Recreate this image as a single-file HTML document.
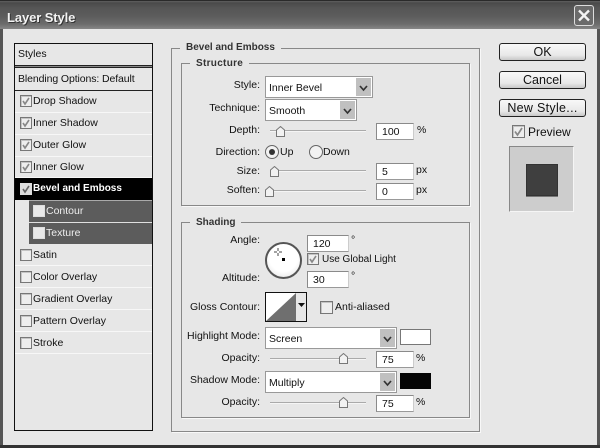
<!DOCTYPE html>
<html><head><meta charset="utf-8"><style>
html,body{margin:0;padding:0;background:#e7e7e7}
#p{position:relative;width:600px;height:448px;overflow:hidden;background:#e7e7e7;font-family:"Liberation Sans",sans-serif;font-size:10.5px;color:#111;filter:blur(.35px)}
#p div,#p span.t{position:absolute;box-sizing:border-box;white-space:nowrap}
.t{line-height:14px}
.r{text-align:right;width:90px}
.row{left:15px;width:137px;height:22px;border-bottom:1px solid #f7f7f7}
.cb{width:12px;height:12px;border:1px solid #777;background:#eee;box-shadow:inset 1px 1px 0 #c4c4c4}
.in{background:#fff;border:1px solid #8a8a8a;border-right-color:#ccc;border-bottom-color:#999;height:17px;font-size:10.5px;line-height:16px;padding-left:5px}
.sel{background:#fff;border:1px solid #999;height:22px;line-height:22px;padding-left:3px;font-size:10.5px}
.ar{top:1px;right:1px;bottom:1px;width:15px;background:#c0c0c0}
.ar svg{position:absolute;left:3px;top:7px}
.tr{height:2px;background:#aaa;border-bottom:1px solid #f5f5f5;box-sizing:content-box}
.th{position:absolute}
.g{border:1px solid #888;box-shadow:1px 1px 0 #f8f8f8}
.lb{background:#e7e7e7;font-weight:bold;color:#333;padding:0 6px;line-height:12px;font-size:10px}
.btn{left:499px;width:87px;height:18px;border:1px solid #222;border-radius:3px;background:linear-gradient(#f8f8f8,#e8e8e8 70%,#c8c8c8);text-align:center;line-height:16px;font-size:12.5px;color:#111}
</style></head><body><div id="p">
<!-- frame -->
<div style="left:0;top:0;width:600px;height:29px;background:linear-gradient(#6a6a6a 0,#4a4a4a 3px,#565656 8px,#5c5c5c 16px,#6c6c6c 24px,#878787 29px)"></div>
<div style="left:0;top:0;width:600px;height:1px;background:#2a2a2a"></div>
<div style="left:0;top:29px;width:3px;height:419px;background:#555"></div>
<div style="left:597px;top:29px;width:3px;height:419px;background:#555"></div>
<div style="left:0;top:445px;width:600px;height:3px;background:#333"></div>
<span class="t" style="position:absolute;left:7px;top:9px;color:#f4f4f4;font-weight:bold;font-size:13px;line-height:17px;letter-spacing:-.1px;text-shadow:1px 1px 0 #333">Layer Style</span>
<div style="left:574px;top:5px;width:20px;height:21px;border:1px solid #ddd;border-radius:3px;background:#6b6b6b">
<svg width="18" height="19" style="position:absolute;left:0;top:0"><path d="M4 4.500 14 14.500M14 4.500 4 14.500" stroke="#f4f4f4" stroke-width="2.400" fill="none"/></svg></div>

<!-- list -->
<div style="left:14px;top:43px;width:139px;height:388px;border:1px solid #111;background:#e7e7e7"></div>
<span class="t" style="position:absolute;left:18px;top:47px">Styles</span>
<div style="left:15px;top:65px;width:137px;height:3px;background:#888;border-top:1px solid #222;border-bottom:1px solid #222"></div>
<span class="t" style="position:absolute;left:18px;top:72px;letter-spacing:-.1px">Blending Options: Default</span>
<div style="left:15px;top:90px;width:137px;height:1px;background:#222"></div>

<div class="row" style="top:91px"></div>
<div class="row" style="top:113px"></div>
<div class="row" style="top:135px"></div>
<div class="row" style="top:156px"></div>
<div class="row" style="top:244px"></div>
<div class="row" style="top:266px"></div>
<div class="row" style="top:288px"></div>
<div class="row" style="top:310px"></div>
<div class="row" style="top:332px"></div>

<div style="left:15px;top:178px;width:137px;height:22px;background:#000"></div>
<div style="left:29px;top:200px;width:123px;height:22px;background:#5c5c5c;border-top:1px solid #aaa"></div>
<div style="left:29px;top:222px;width:123px;height:22px;background:#5c5c5c;border-top:1px solid #e0e0e0"></div>
<div class="cb" style="left:20px;top:95px"><svg width="10" height="10"><path d="M2 5 4 8 8 2" stroke="#888" stroke-width="1.600" fill="none"/></svg></div>
<div class="cb" style="left:20px;top:117px"><svg width="10" height="10"><path d="M2 5 4 8 8 2" stroke="#888" stroke-width="1.600" fill="none"/></svg></div>
<div class="cb" style="left:20px;top:139px"><svg width="10" height="10"><path d="M2 5 4 8 8 2" stroke="#888" stroke-width="1.600" fill="none"/></svg></div>
<div class="cb" style="left:20px;top:161px"><svg width="10" height="10"><path d="M2 5 4 8 8 2" stroke="#888" stroke-width="1.600" fill="none"/></svg></div>
<div class="cb" style="left:20px;top:183px;border-color:#ddd;background:#ddd;box-shadow:none"><svg width="10" height="10"><path d="M2 5 4 8 8 2" stroke="#666" stroke-width="1.600" fill="none"/></svg></div>
<div class="cb" style="left:33px;top:205px;border-color:#ddd;background:#e8e8e8;box-shadow:none"></div>
<div class="cb" style="left:33px;top:227px;border-color:#ddd;background:#e8e8e8;box-shadow:none"></div>
<div class="cb" style="left:20px;top:249px"></div>
<div class="cb" style="left:20px;top:271px"></div>
<div class="cb" style="left:20px;top:293px"></div>
<div class="cb" style="left:20px;top:315px"></div>
<div class="cb" style="left:20px;top:337px"></div>
<span class="t" style="position:absolute;left:33px;top:94px">Drop Shadow</span>
<span class="t" style="position:absolute;left:33px;top:116px">Inner Shadow</span>
<span class="t" style="position:absolute;left:33px;top:138px">Outer Glow</span>
<span class="t" style="position:absolute;left:33px;top:160px">Inner Glow</span>
<span class="t" style="position:absolute;left:33px;top:182px;color:#fff;font-weight:bold;font-size:10px">Bevel and Emboss</span>
<span class="t" style="position:absolute;left:46px;top:204px;color:#eee">Contour</span>
<span class="t" style="position:absolute;left:46px;top:226px;color:#eee">Texture</span>
<span class="t" style="position:absolute;left:33px;top:248px">Satin</span>
<span class="t" style="position:absolute;left:33px;top:270px">Color Overlay</span>
<span class="t" style="position:absolute;left:33px;top:292px">Gradient Overlay</span>
<span class="t" style="position:absolute;left:33px;top:314px">Pattern Overlay</span>
<span class="t" style="position:absolute;left:33px;top:336px">Stroke</span>

<!-- groups -->
<div class="g" style="left:171px;top:48px;width:309px;height:384px"></div>
<div class="lb" style="left:180px;top:42px">Bevel and Emboss</div>
<div class="g" style="left:181px;top:63px;width:289px;height:143px"></div>
<div class="lb" style="left:190px;top:58px;letter-spacing:.3px">Structure</div>
<div class="g" style="left:181px;top:222px;width:289px;height:196px"></div>
<div class="lb" style="left:190px;top:217px">Shading</div>

<!-- structure -->
<span class="t r" style="position:absolute;left:170px;top:78px">Style:</span>
<div class="sel" style="left:265px;top:76px;width:108px"><span>Inner Bevel</span><div class="ar"><svg width="9" height="7"><path d="M1 1 4.500 5 8 1" stroke="#333" stroke-width="1.700" fill="none"/></svg></div></div>
<span class="t r" style="position:absolute;left:170px;top:101px">Technique:</span>
<div class="sel" style="left:265px;top:99px;width:92px"><span>Smooth</span><div class="ar"><svg width="9" height="7"><path d="M1 1 4.500 5 8 1" stroke="#333" stroke-width="1.700" fill="none"/></svg></div></div>
<span class="t r" style="position:absolute;left:170px;top:123px">Depth:</span>
<div class="tr" style="left:270px;top:130px;width:96px"></div><svg class="th" style="left:276px;top:126px" width="9" height="11"><path d="M.5 4 4.500 .5 8.500 4V10.500H.5Z" fill="#f2f2f2" stroke="#777"/></svg>
<div class="in" style="left:376px;top:123px;width:38px">100</div><span class="t" style="position:absolute;left:417px;top:123px">%</span>
<span class="t r" style="position:absolute;left:170px;top:145px">Direction:</span>
<div style="left:265px;top:145px;width:14px;height:14px;border:1px solid #666;border-radius:50%;background:#f2f2f2"></div>
<div style="left:269px;top:149px;width:6px;height:6px;border-radius:50%;background:#333"></div>
<span class="t" style="position:absolute;left:280px;top:145px">Up</span>
<div style="left:309px;top:145px;width:14px;height:14px;border:1px solid #666;border-radius:50%;background:#f2f2f2"></div>
<span class="t" style="position:absolute;left:323px;top:145px">Down</span>
<span class="t r" style="position:absolute;left:170px;top:164px">Size:</span>
<div class="tr" style="left:270px;top:170px;width:96px"></div><svg class="th" style="left:270px;top:166px" width="9" height="11"><path d="M.5 4 4.500 .5 8.500 4V10.500H.5Z" fill="#f2f2f2" stroke="#777"/></svg>
<div class="in" style="left:376px;top:163px;width:38px">5</div><span class="t" style="position:absolute;left:416px;top:163px">px</span>
<span class="t r" style="position:absolute;left:170px;top:183px">Soften:</span>
<div class="tr" style="left:268px;top:190px;width:98px"></div><svg class="th" style="left:265px;top:186px" width="9" height="11"><path d="M.5 4 4.500 .5 8.500 4V10.500H.5Z" fill="#f2f2f2" stroke="#777"/></svg>
<div class="in" style="left:376px;top:183px;width:38px">0</div><span class="t" style="position:absolute;left:416px;top:183px">px</span>

<!-- shading -->
<span class="t r" style="position:absolute;left:170px;top:233px">Angle:</span>
<div class="in" style="left:307px;top:235px;width:42px">120</div><span class="t" style="position:absolute;left:351px;top:233px">°</span>
<div style="left:265px;top:242px;width:37px;height:37px;border:2px solid #555;border-radius:50%;background:radial-gradient(circle at 50% 40%,#fff 55%,#ddd)"></div>
<div style="left:282px;top:258px;width:3px;height:3px;background:#000"></div>
<svg style="position:absolute;left:274px;top:248px" width="8" height="8"><path d="M4 0V3M4 5V8M0 4H3M5 4H8" stroke="#444" stroke-width="1"/></svg>
<div class="cb" style="left:307px;top:253px"><svg width="10" height="10"><path d="M2 5 4 8 8 2" stroke="#888" stroke-width="1.600" fill="none"/></svg></div>
<span class="t" style="position:absolute;left:322px;top:253px;font-size:10px">Use Global Light</span>
<span class="t r" style="position:absolute;left:170px;top:271px">Altitude:</span>
<div class="in" style="left:307px;top:271px;width:42px">30</div><span class="t" style="position:absolute;left:351px;top:269px">°</span>
<span class="t r" style="position:absolute;left:170px;top:300px">Gloss Contour:</span>
<div style="left:265px;top:292px;width:42px;height:30px;border:1px solid #111;background:#e7e7e7"></div>
<svg style="position:absolute;left:266px;top:293px" width="30" height="28"><rect width="30" height="28" fill="#fff"/><path d="M0 28 30 0V28Z" fill="#6f6f6f"/></svg>
<svg style="position:absolute;left:298px;top:303px" width="7" height="5"><path d="M0 0H7L3.500 4Z" fill="#111"/></svg>
<div class="cb" style="left:320px;top:301px;width:13px;height:13px"></div>
<span class="t" style="position:absolute;left:335px;top:300px">Anti-aliased</span>
<span class="t r" style="position:absolute;left:170px;top:329px">Highlight Mode:</span>
<div class="sel" style="left:265px;top:327px;width:132px"><span>Screen</span><div class="ar"><svg width="9" height="7"><path d="M1 1 4.500 5 8 1" stroke="#333" stroke-width="1.700" fill="none"/></svg></div></div>
<div style="left:400px;top:329px;width:31px;height:16px;background:#fff;border:1px solid #777"></div>
<span class="t r" style="position:absolute;left:170px;top:351px">Opacity:</span>
<div class="tr" style="left:270px;top:358px;width:96px"></div><svg class="th" style="left:339px;top:353px" width="9" height="11"><path d="M.5 4 4.500 .5 8.500 4V10.500H.5Z" fill="#f2f2f2" stroke="#777"/></svg>
<div class="in" style="left:376px;top:351px;width:38px">75</div><span class="t" style="position:absolute;left:416px;top:351px">%</span>
<span class="t r" style="position:absolute;left:170px;top:373px">Shadow Mode:</span>
<div class="sel" style="left:265px;top:371px;width:132px"><span>Multiply</span><div class="ar"><svg width="9" height="7"><path d="M1 1 4.500 5 8 1" stroke="#333" stroke-width="1.700" fill="none"/></svg></div></div>
<div style="left:400px;top:373px;width:31px;height:16px;background:#050505"></div>
<span class="t r" style="position:absolute;left:170px;top:395px">Opacity:</span>
<div class="tr" style="left:270px;top:402px;width:96px"></div><svg class="th" style="left:339px;top:397px" width="9" height="11"><path d="M.5 4 4.500 .5 8.500 4V10.500H.5Z" fill="#f2f2f2" stroke="#777"/></svg>
<div class="in" style="left:376px;top:395px;width:38px">75</div><span class="t" style="position:absolute;left:416px;top:395px">%</span>

<!-- buttons -->
<div class="btn" style="top:43px">OK</div>
<div class="btn" style="top:71px">Cancel</div>
<div class="btn" style="top:99px;letter-spacing:.3px">New Style...</div>
<div class="cb" style="left:512px;top:125px;width:13px;height:13px"><svg width="11" height="11"><path d="M2 5.500 4.500 9 9 2" stroke="#888" stroke-width="1.700" fill="none"/></svg></div>
<span class="t" style="position:absolute;left:528px;top:125px;font-size:12px">Preview</span>
<div style="left:509px;top:146px;width:65px;height:66px;background:#cdcdcd;border:1px solid #888;border-right-color:#f5f5f5;border-bottom-color:#f5f5f5"></div>
<div style="left:526px;top:164px;width:32px;height:32px;background:#3f3f3f;border:1px solid #333;box-shadow:0 1px 0 #777"></div>
</div></body></html>
